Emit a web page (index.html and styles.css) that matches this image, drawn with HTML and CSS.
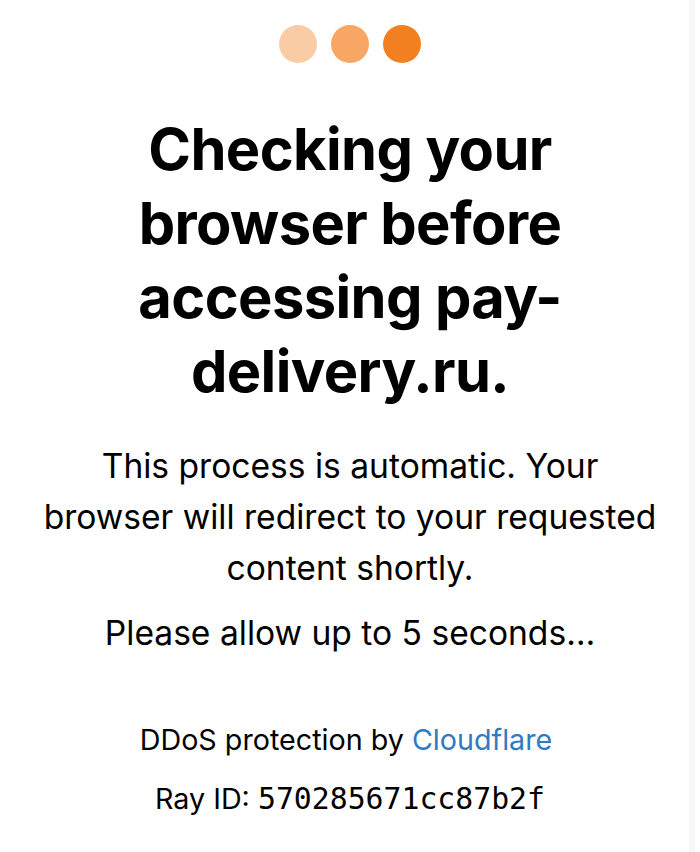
FILE: index.html
```html
<!DOCTYPE html>
<html lang="en">
<head>
<meta charset="utf-8">
<title>Just a moment...</title>
<link rel="stylesheet" href="styles.css">
</head>
<body>
<main class="content">
  <div class="dots">
    <span class="dot dot-1"></span>
    <span class="dot dot-2"></span>
    <span class="dot dot-3"></span>
  </div>
  <h1 class="title">Checking your browser before accessing pay-delivery.ru.</h1>
  <p class="lead">This process is automatic. Your browser will redirect to your requested content shortly.</p>
  <p class="lead wait">Please allow up to 5 seconds&hellip;</p>
  <div class="footer">
    <p class="footer-line footer-credit">DDoS protection by <a class="link" href="#">Cloudflare</a></p>
    <p class="footer-line">Ray ID: <code class="ray">570285671cc87b2f</code></p>
  </div>
</main>
<div class="edge"></div>
</body>
</html>
```
FILE: styles.css
```css
html, body {
  margin: 0;
  padding: 0;
  background: #ffffff;
}

body {
  font-family: Inter, "Liberation Sans", Arial, sans-serif;
  color: #000000;
  height: 852px;
  overflow: hidden;
}

.content {
  display: flex;
  flex-direction: column;
  align-items: center;
  text-align: center;
  padding: 25px 0 0;
}

.edge {
  position: fixed;
  top: 0;
  bottom: 0;
  right: 5px;
  width: 6px;
  background: #f7f7f7;
}

.dots {
  display: flex;
  gap: 14px;
}

.dot {
  width: 38px;
  height: 38px;
  border-radius: 50%;
  background: #f38020;
}

.dot-1 { background: #facca6; }
.dot-2 { background: #f7a663; }
.dot-3 { background: #f38020; }

.title {
  max-width: 520px;
  margin: 49px 0 0;
  font-size: 57.8px;
  line-height: 74px;
  font-weight: 700;
  letter-spacing: -0.6px;
}

.lead {
  max-width: 630px;
  margin: 32px 0 0;
  font-size: 33.6px;
  line-height: 51px;
  font-weight: 400;
}

.wait {
  margin-top: 14px;
}

.footer {
  margin-top: 62px;
  display: flex;
  flex-direction: column;
  gap: 19px;
}

.footer-line {
  margin: 0;
  font-size: 28.7px;
  line-height: 40px;
}

.footer-credit {
  padding-right: 8px;
}

.link {
  color: #2f7bbf;
  text-decoration: none;
}

.ray {
  font-family: "DejaVu Sans Mono", "Liberation Mono", monospace;
  font-size: 29.8px;
}
```
